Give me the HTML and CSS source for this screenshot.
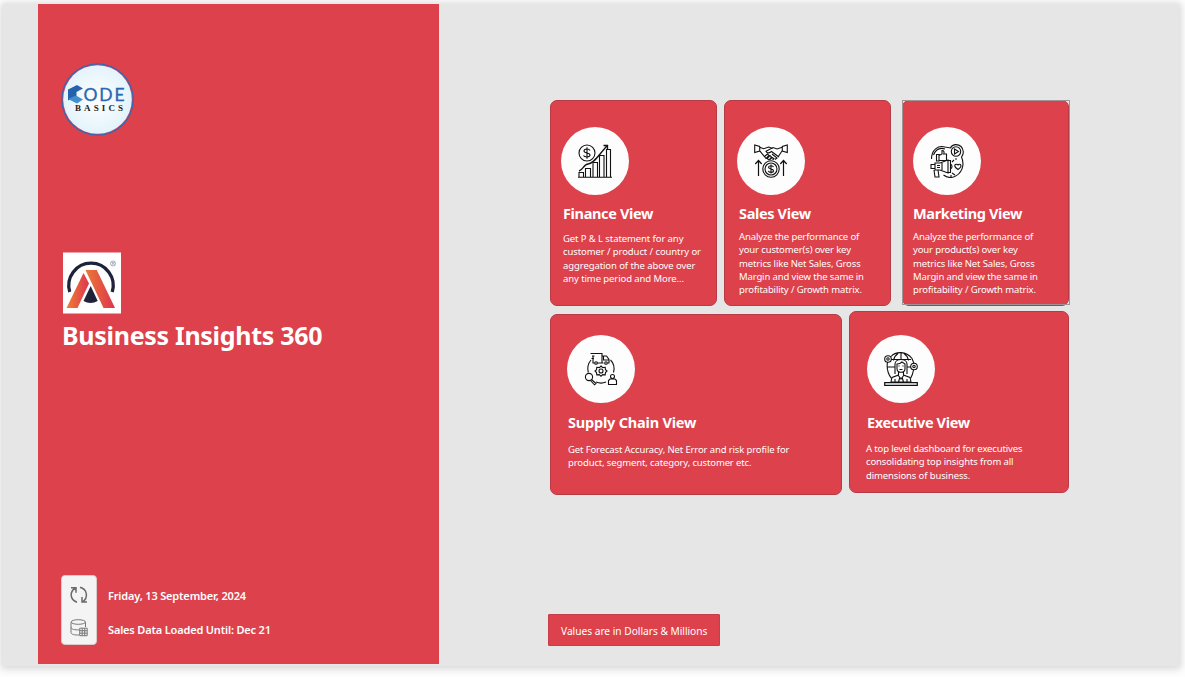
FILE: index.html
```html
<!DOCTYPE html>
<html lang="en">
<head>
<meta charset="utf-8">
<title>Business Insights 360</title>
<link rel="stylesheet" href="styles.css">
</head>
<body>
<div class="report">
  <aside class="sidebar">
    <svg class="logo-codebasics" viewBox="0 0 74 74">
      <defs><radialGradient id="disc"><stop offset="0" stop-color="#ffffff"/><stop offset="1" stop-color="#e3f3fb"/></radialGradient></defs>
      <circle cx="37.500" cy="37.500" r="36.300" fill="#3c66ad"/>
      <circle cx="37.500" cy="37.500" r="35" fill="#c04a68"/>
      <circle cx="37.500" cy="37.500" r="34.300" fill="url(#disc)"/>
      <path d="M8 27.500 17 23l6 3.500-6.500 3.500v5L8 38.500z" fill="#2562ac"/>
      <path d="M8 37l8-3.500 7 4-6 4z" fill="#3f8fd0"/>
      <text class="logo-code" x="23.500" y="38.500" textLength="41">ODE</text>
      <text class="logo-basics" x="15" y="49.300" textLength="48">BASICS</text>
    </svg>
    <svg class="logo-atliq" viewBox="0 0 58 62">
      <defs>
        <linearGradient id="left"><stop offset="0" stop-color="#ed8033"/><stop offset="1" stop-color="#de3450"/></linearGradient>
        <linearGradient id="right"><stop offset="0" stop-color="#eb7a35"/><stop offset="1" stop-color="#dd334f"/></linearGradient>
      </defs>
      <path fill="#fff" d="M0 .5h58v61H0z"/>
      <path d="M6.800 40A22.200 22.200 0 1 1 49.200 40" fill="none" stroke="#20223a" stroke-width="3.300"/>
      <path d="M2 50 20 20h14l18 30z" fill="#fff"/>
      <path d="M20.500 21 3.500 56h11L26 31.500z" fill="url(#left)"/>
      <path d="M22.500 18h11.300L52 56H40.500z" fill="url(#right)"/>
      <path d="M27.700 34 20.500 49q7 4 14.200 0z" fill="#20223a"/>
      <circle cx="50" cy="11.500" r="2.500" fill="none" stroke="#777" stroke-width=".6"/>
      <text class="logo-mark" x="48.700" y="13">R</text>
    </svg>
    <h1 class="title">Business Insights 360</h1>
    <div class="status">
      <div class="status-icons">
        <svg width="18" height="18" viewBox="0 0 18 18" fill="none" stroke="#6b6b6b" stroke-width="1.500">
          <path d="M7 16.200C-.5 13.500-.5 5.500 5.500 2M1 1.700h5v5M10 1.200c7.500 2 8.500 10.500 2.500 14.800M17 16h-5v-5"/>
        </svg>
        <svg width="18" height="18" viewBox="0 0 18 18" fill="none" stroke="#777" stroke-width="1">
          <path d="M15.500 8V3.500M1 3.500v10c0 2 4 2.700 8 2.500M1 8.500c0 1.800 4 2.500 8 2.400"/>
          <ellipse cx="8.300" cy="3" rx="7.200" ry="2.300"/>
          <path d="M9.700 9.200h7.500v7.500H9.700zM9.700 11.700h7.500M9.700 14.200h7.500M12.200 9.200v7.500M14.700 9.200v7.500"/>
        </svg>
      </div>
      <div class="status-text">
        <p class="date">Friday, 13 September, 2024</p>
        <p class="loaded">Sales Data Loaded Until: Dec 21</p>
      </div>
    </div>
  </aside>

  <main class="board">
    <div class="row">
      <section class="card finance">
        <div class="disc">
          <svg width="34" height="34" viewBox="0 0 34 34">
            <circle cx="9" cy="9" r="8"/>
            <path d="M12 6.500C11 4.500 6 4.500 6 7s6 1.500 6 4-5.500 2.500-6.500.5M9 3.300v11.400"/>
            <path d="M1 27c4-1 5-7 9-7 6 0 12-11 19-18M25.500 1.500h4v4" stroke-width="1.300"/>
            <path d="M1 33v-4.500h4.500V33M7.500 33v-8.500h5V33M15 33V18.500h4.500V33M21.500 33V11.500H26V33M28.500 33V5.500h4V33M0 33.300h34"/>
          </svg>
        </div>
        <h2>Finance View</h2>
        <p>Get P &amp; L statement for any<br>customer / product / country or<br>aggregation of the above over<br>any time period and More...</p>
      </section>
      <section class="card sales">
        <div class="disc">
          <svg width="34" height="34" viewBox="0 0 34 34">
            <path d="M.7 1v7.500l5-1.500V2.500zM33.300 1v7.500l-5-1.500V2.500zM5.700 3.200l4 1.500 5-1.700 4 1.500M28.300 3.200 23 5l-4-1.500-7 3.800c1 2.200 3 2 5.500.2l7.500 5.500M6 7.200l4.500 5.500M28 7l-4 6M10.500 12.500l3-2.500 1.500 1.500-3 3zM13 14.500l3-3 1.500 1.500-2.500 3zM16 15.500l2-2 2 1.200-1.500 1.500M18 10l5 4-2 1.500"/>
            <circle cx="17" cy="25" r="8.200"/><circle cx="17" cy="25" r="6"/>
            <path d="M19.500 23c-.8-2-5-1.500-5 .3s5 1.200 5 3.400-4.500 2.200-5.200.2M17 20.500v9"/>
            <path d="M4.500 32V17M1.300 20l3.200-3.500L7.700 20M29.500 32V17M26.300 20l3.200-3.500 3.200 3.500" stroke-width="1.200"/>
          </svg>
        </div>
        <h2>Sales View</h2>
        <p>Analyze the performance of<br>your customer(s) over key<br>metrics like Net Sales, Gross<br>Margin and view the same in<br>profitability / Growth matrix.</p>
      </section>
      <section class="card marketing">
        <div class="disc">
          <svg width="34" height="34" viewBox="0 0 34 34">
            <path d="M1.500 15C1.500 6 8 1 15 3l5.500 1C22-.2 28-.3 31 2.500s3 7.500.5 10.500c3.500 8 .5 17-8 20-4 1.200-7 .3-10-2M3.500 11C6 5 10 3.300 15 5"/>
            <circle cx="26" cy="7.500" r="4.700"/><path d="M24.500 5v5l4-2.500z"/>
            <path d="M6.500 10.500H9V17H6.500zM9 11.500l3-1.500V6.500c2 0 2.500 1.500 1.700 3.500H16.500v6.500H9"/>
            <path d="M5 19h5l8-3v13l-8-3H5zM5 20.500H1v4h4M18 16.500h2.500v12H18M20.500 20c2 1 2 4 0 5M4 26l1 7h4l-1-7M7 21.500h3M7 23.500h3M12 19v7"/>
            <path d="M28 25.500c-6.500-4.500-1.500-6.500 0-4.500 2-2 5.500.5 0 4.500zM22 18l2-2M22 29l3 2M21 31v2M25 15h2"/>
          </svg>
        </div>
        <h2>Marketing View</h2>
        <p>Analyze the performance of<br>your product(s) over key<br>metrics like Net Sales, Gross<br>Margin and view the same in<br>profitability / Growth matrix.</p>
      </section>
    </div>
    <div class="row row-wide">
      <section class="card supply">
        <div class="disc">
          <svg width="34" height="34" viewBox="0 0 34 34">
            <path d="M9 1.500h9V11h-5M9 4v7h1.500M18 4h4.500l2.500 3.500V11h-1.500M19.500 11H18M19.500 4v4H25M6.500 1.500H9M8 4h2.500M7.500 6.500H10"/>
            <circle cx="12" cy="11" r="1.300"/><circle cx="22" cy="11" r="1.300"/>
            <path d="M7 8c-3 3.500-3.800 8-2.700 12.500M26.500 8c3.500 3.500 4.300 8 3 12.500M12 30c3 1.300 7 1.300 10 0"/>
            <circle cx="17" cy="19" r="2"/>
            <path d="m17 14 1.700 1.600 2.500-.3.300 2.400 1.500 1.300-1.500 1.500-.3 2.300-2.500-.2L17 24.300l-1.700-1.700-2.500.2-.3-2.300L11 19l1.500-1.300.3-2.400 2.500.3z"/>
            <circle cx="5" cy="25" r="3.600"/><path d="m7.500 27.500 4.500 4-1.500 1.300-4-4.300M24.500 32.500v-4l1.500-1.500h5l1.500 1.500v4z"/>
            <circle cx="28.500" cy="24.500" r="2"/>
          </svg>
        </div>
        <h2>Supply Chain View</h2>
        <p>Get Forecast Accuracy, Net Error and risk profile for<br>product, segment, category, customer etc.</p>
      </section>
      <section class="card executive">
        <div class="disc">
          <svg width="34" height="34" viewBox="0 0 34 34">
            <path d="M7 4.500C12-1 22-1 28 6.500l2 5M3.500 10c-1 6 .5 12 4 16.500M29.500 18c-.5 3-1.500 6-3 8.500M17 1v6M14 1.500c-3 2-4 4.500-4.500 7M20 1.500c3 2 4 4.500 4.500 7M7 7.500h20M3.500 15H11M23 15h4"/>
            <circle cx="4" cy="7" r="3.300"/><circle cx="4" cy="7" r="1.200"/><circle cx="30" cy="14.500" r="3.300"/><circle cx="30" cy="14.500" r="1.200"/>
            <path d="M11 22V12c0-6 12-6 12 0v10M13 12c3 0 5-2 5-2l3 2v4.500c0 5-8 5-8 0zM15 13.500v1M19 13.500v1M15.500 17.500h3M14.500 20v3L8 25.500 7 30h20l-1-4.500-6.500-2.500v-3M14 23l3 4 3-4M16 25l-1.500 5M18 25l1.500 5M11 27v3M23 27v3"/>
            <path d="M.7 30.700h32.600v2.600H.7z" stroke-width="1.200"/>
          </svg>
        </div>
        <h2>Executive View</h2>
        <p>A top level dashboard for executives<br>consolidating top insights from all<br>dimensions of business.</p>
      </section>
    </div>
    <div class="note">Values are in Dollars &amp; Millions</div>
  </main>
</div>
</body>
</html>
```

FILE: styles.css
```css
* { box-sizing: border-box; }
body {
  height: 677px;
  margin: 0;
  padding: 4px 6px 0 3px;
  background: #fdfdfd;
  font-family: "Noto Sans", "Open Sans", sans-serif;
  color: #fff;
}
h1, h2, p { margin: 0; white-space: nowrap; }
.report {
  display: flex;
  align-items: flex-start;
  height: 662px;
  padding-left: 35px;
  background: #e6e6e6;
  box-shadow: 0 1px 7px 2px rgba(0, 0, 0, .15);
}
.sidebar {
  display: flex;
  flex-direction: column;
  align-items: flex-start;
  width: 401px;
  height: 660px;
  padding: 58px 0 0 23px;
  background: #dd414b;
}
.logo-codebasics { display: block; width: 74px; height: 74px; margin-left: -1px; }
.logo-code { font: 17.500px Lato, sans-serif; fill: #2a67b0; stroke: #2a67b0; stroke-width: .3px; }
.logo-basics { font: bold 9px "Liberation Serif", serif; fill: #222; }
.logo-mark { font: 4px "Liberation Sans", sans-serif; fill: #666; }
.logo-atliq { display: block; width: 58px; height: 62px; margin: 116px 0 0 2px; }
.title { margin: 3px 0 0 1px; font-size: 25px; line-height: 36px; font-weight: 700; letter-spacing: -.3px; }
.status { display: flex; margin-top: 222px; }
.status-icons {
  display: flex;
  flex-direction: column;
  align-items: center;
  gap: 15px;
  width: 36px;
  height: 70px;
  padding-top: 10px;
  border: 1px solid #dcc9c9;
  border-radius: 4px;
  background: #f4f4f4;
}
.status-text { padding: 11px 0 0 11px; font-size: 11px; font-weight: 600; letter-spacing: -.17px; }
.status-text p { height: 34px; line-height: 20px; }

.board { padding: 96px 0 0 111px; }
.row { display: flex; width: 519px; height: 206px; gap: 7px; }
.row-wide { height: 183px; margin-top: 5px; }
.card {
  flex: none;
  width: 167px;
  border: 1px solid #b83a45;
  border-radius: 7px;
  background: #dd414b;
}
.disc {
  display: flex;
  align-items: center;
  justify-content: center;
  width: 68px;
  height: 68px;
  border-radius: 50%;
  background: #fdfdfd;
}
.disc svg { margin-right: 1px; fill: none; stroke: #111; stroke-width: 1.100; }
.card h2 { margin-top: 9px; font-size: 14.500px; line-height: 20px; font-weight: 700; letter-spacing: -.35px; }
.card p { font-size: 9.500px; line-height: 13.250px; letter-spacing: -.13px; }
.finance { padding: 25.500px 0 0 10px; }
.finance h2 { margin: 8.500px 0 0 2px; }
.finance p { margin: 9px 0 0 2px; letter-spacing: -.09px; }
.sales { padding: 25.500px 0 0 12px; }
.sales h2, .sales p { margin-left: 2px; }
.sales h2 { margin-top: 8.500px; }
.sales p { margin-top: 7px; }
.marketing { position: relative; margin-left: 4px; padding: 25.500px 0 0 10px; }
.marketing::after { content: ""; position: absolute; inset: -1px -2px 0 -1px; border: 1px solid #a09494; }
.marketing h2 { margin-top: 8.500px; }
.marketing p { margin-top: 7px; }
.supply { width: 292px; height: 181px; margin-top: 3px; padding: 20px 0 0 16px; }
.supply h2 { margin: 9px 0 0 1px; letter-spacing: -.2px; }
.supply p { margin: 11px 0 0 1px; }
.executive { width: 220px; height: 182px; padding: 23px 0 0 17px; }
.executive p { margin: 10px 0 0 -1px; }
.note {
  width: 172px;
  height: 32px;
  margin: 120px 0 0 -2px;
  padding-left: 12px;
  border: 1px solid #c43d48;
  border-radius: 1px;
  background: #dd414b;
  font-size: 10.200px;
  letter-spacing: -.02px;
  line-height: 32px;
  white-space: nowrap;
}
```
